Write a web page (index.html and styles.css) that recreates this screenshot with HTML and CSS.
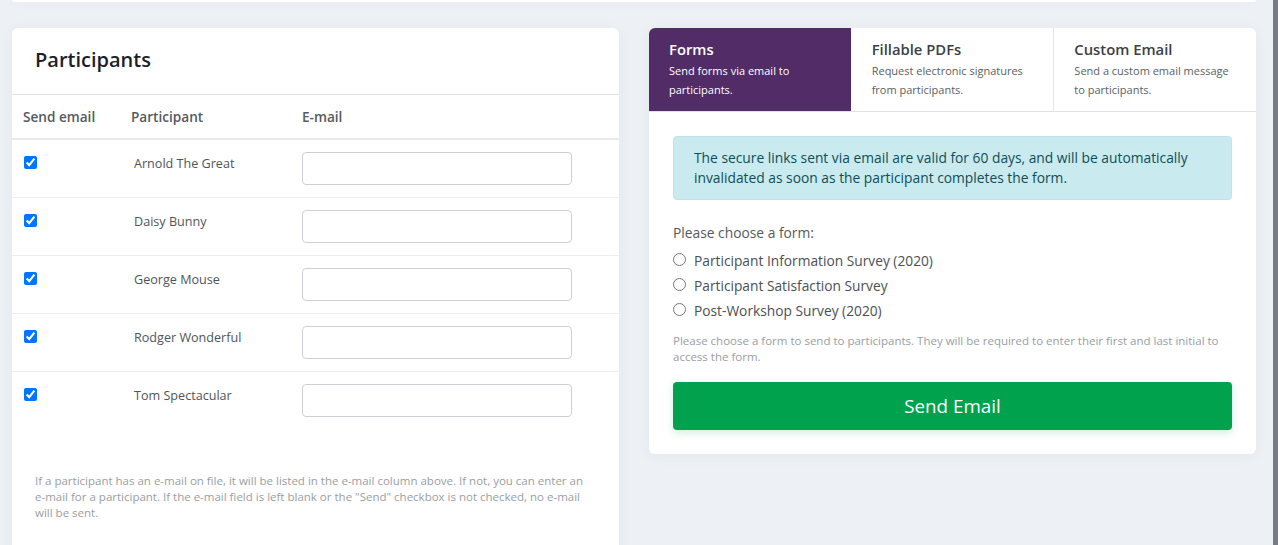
FILE: index.html
```html
<!DOCTYPE html>
<html lang="en">
<head>
<meta charset="utf-8">
<title>Send Email</title>
<link rel="stylesheet" href="styles.css">
</head>
<body>
<div class="page">
  <div class="main">
    <div class="top-card"></div>
    <div class="columns">
      <section class="card participants">
        <h2 class="card-title">Participants</h2>
        <table class="ptable">
          <thead>
            <tr><th class="c-send">Send email</th><th class="c-name">Participant</th><th class="c-mail">E-mail</th></tr>
          </thead>
          <tbody>
            <tr><td class="c-send"><input type="checkbox" checked></td><td class="c-name">Arnold The Great</td><td class="c-mail"><input class="field" type="text"></td></tr>
            <tr><td class="c-send"><input type="checkbox" checked></td><td class="c-name">Daisy Bunny</td><td class="c-mail"><input class="field" type="text"></td></tr>
            <tr><td class="c-send"><input type="checkbox" checked></td><td class="c-name">George Mouse</td><td class="c-mail"><input class="field" type="text"></td></tr>
            <tr><td class="c-send"><input type="checkbox" checked></td><td class="c-name">Rodger Wonderful</td><td class="c-mail"><input class="field" type="text"></td></tr>
            <tr class="last"><td class="c-send"><input type="checkbox" checked></td><td class="c-name">Tom Spectacular</td><td class="c-mail"><input class="field" type="text"></td></tr>
          </tbody>
        </table>
        <p class="note">If a participant has an e-mail on file, it will be listed in the e-mail column above. If not, you can enter an e-mail for a participant. If the e-mail field is left blank or the "Send" checkbox is not checked, no e&#8209;mail will be sent.</p>
      </section>

      <section class="card sender">
        <div class="tabs">
          <div class="tab active">
            <div class="tab-title">Forms</div>
            <div class="tab-sub">Send forms via email to participants.</div>
          </div>
          <div class="tab">
            <div class="tab-title">Fillable PDFs</div>
            <div class="tab-sub">Request electronic signatures from participants.</div>
          </div>
          <div class="tab">
            <div class="tab-title">Custom Email</div>
            <div class="tab-sub">Send a custom email message to participants.</div>
          </div>
        </div>
        <div class="sender-body">
          <div class="alert">The secure links sent via email are valid for 60 days, and will be automatically invalidated as soon as the participant completes the form.</div>
          <div class="choose">Please choose a form:</div>
          <label class="radio"><input type="radio" name="form"> <span>Participant Information Survey (2020)</span></label>
          <label class="radio"><input type="radio" name="form"> <span>Participant Satisfaction Survey</span></label>
          <label class="radio"><input type="radio" name="form"> <span>Post-Workshop Survey (2020)</span></label>
          <p class="help">Please choose a form to send to participants. They will be required to enter their first and last initial to access the form.</p>
          <button class="send-btn" type="button">Send Email</button>
        </div>
      </section>
    </div>
  </div>
  <div class="scrollbar"></div>
</div>
</body>
</html>
```

FILE: styles.css
```css
* { box-sizing: border-box; }
html, body { margin: 0; padding: 0; }
body {
  background: #edf1f5;
  font-family: "Open Sans", "Noto Sans", sans-serif;
  color: #444;
  overflow: hidden;
  height: 545px;
}
.page {
  display: flex;
  height: 545px;
}
.main {
  flex: 1;
  min-width: 0;
}
.scrollbar {
  width: 5px;
  background: #767c82;
}
.top-card {
  height: 2px;
  margin-left: 12px;
  width: 1244px;
  background: #fff;
  border-radius: 0 0 6px 6px;
  box-shadow: 0 2px 10px rgba(30, 50, 80, 0.06);
}
.columns {
  display: grid;
  grid-template-columns: 607px 607px;
  column-gap: 30px;
  margin-left: 12px;
  margin-top: 26px;
  align-items: start;
}
.card {
  background: #fff;
  border-radius: 6px;
  box-shadow: 0 2px 14px rgba(30, 50, 80, 0.05);
  overflow: hidden;
}
.card-title {
  margin: 0;
  height: 67px;
  padding: 19px 23px 0;
  font-size: 20px;
  font-weight: 600;
  color: #1b1e2b;
  line-height: 26px;
  border-bottom: 1px solid #dfe2e6;
}
.ptable {
  width: 100%;
  border-collapse: collapse;
  font-size: 13px;
  table-layout: fixed;
}
.ptable th {
  text-align: left;
  font-size: 13.6px;
  font-weight: 600;
  color: #555a60;
  height: 44px;
  padding: 0 11px;
  border-bottom: 2px solid #e7eaee;
  vertical-align: middle;
}
.ptable td {
  vertical-align: top;
  border-bottom: 1px solid #eceef1;
  height: 58px;
  padding: 12px 11px 0;
}
.ptable tr.last td { border-bottom: none; }
.ptable .c-send { width: 108px; }
.ptable .c-name { width: 182px; }
.ptable td.c-name {
  padding-left: 14px;
  padding-top: 14px;
  font-size: 12.6px;
  color: #50555b;
  line-height: 20px;
}
.ptable td.c-send input {
  margin: 4px 0 0 1px;
  width: 13px;
  height: 13px;
}
.ptable td.c-mail { padding-left: 0; }
.ptable th.c-mail { padding-left: 0; }
.field {
  display: block;
  width: 270px;
  height: 33px;
  border: 1px solid #ccd0d5;
  border-radius: 4px;
  background: #fff;
  font: inherit;
}
.note {
  margin: 44px 23px 40px;
  font-size: 11.5px;
  line-height: 16px;
  color: #9a9ea3;
}

.tabs {
  display: flex;
  border-bottom: 1px solid #dee2e6;
}
.tab {
  flex: 1;
  height: 83px;
  padding: 10px 20px 0;
  border-left: 1px solid #e2e5e9;
}
.tab:first-child { border-left: none; }
.tab.active {
  background: #522c67;
  border-left-color: #522c67;
}
.tab.active + .tab { border-left-color: transparent; }
.tab-title {
  font-size: 14.8px;
  font-weight: 600;
  color: #3c4045;
  line-height: 22px;
  margin-bottom: 1px;
}
.tab-sub {
  font-size: 11px;
  line-height: 19px;
  color: #5a5f65;
}
.tab.active .tab-title,
.tab.active .tab-sub { color: #fff; }

.sender-body {
  padding: 24px 24px 24px;
}
.alert {
  background: #c9eaee;
  border: 1px solid #bde3e8;
  border-radius: 4px;
  padding: 11px 20px;
  font-size: 13.8px;
  line-height: 20px;
  color: #0f4e59;
}
.choose {
  margin-top: 23px;
  font-size: 13.8px;
  line-height: 20px;
  color: #55595e;
  margin-bottom: 5px;
}
.radio {
  display: flex;
  align-items: center;
  height: 25px;
  font-size: 13.75px;
  color: #4b5055;
}
.radio input {
  margin: 0 8px 2px 0;
  width: 13px;
  height: 13px;
}
.help {
  margin: 10px 0 0;
  font-size: 11.5px;
  line-height: 16px;
  color: #9a9ea3;
}
.send-btn {
  display: block;
  width: 100%;
  height: 48px;
  margin-top: 17px;
  background: #00a24e;
  border: none;
  border-radius: 4px;
  color: #fff;
  font: inherit;
  font-size: 18.8px;
  box-shadow: 0 3px 8px rgba(0, 160, 80, 0.18);
}
```
